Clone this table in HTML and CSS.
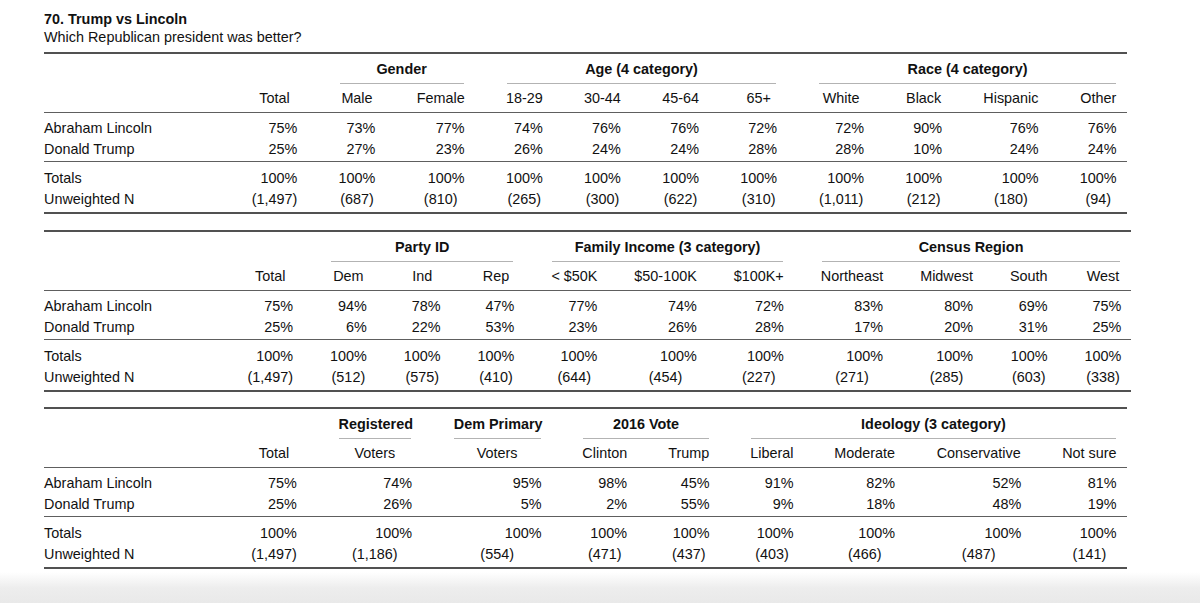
FILE: index.html
```html
<!DOCTYPE html>
<html lang="en">
<head>
<meta charset="utf-8">
<title>70. Trump vs Lincoln</title>
<link rel="stylesheet" href="styles.css">
</head>
<body>
<main class="page">
  <h1 class="title">70. Trump vs Lincoln</h1>
  <p class="subtitle">Which Republican president was better?</p>

  <section class="xtab t1">
    <div class="row grp">
      <div class="g lead span2">Gender</div>
      <div class="g span4">Age (4 category)</div>
      <div class="g span4">Race (4 category)</div>
    </div>
    <div class="row hdr">
      <div></div>
      <div>Total</div><div>Male</div><div>Female</div><div>18-29</div><div>30-44</div><div>45-64</div><div>65+</div><div>White</div><div>Black</div><div>Hispanic</div><div>Other</div>
    </div>
    <div class="block top">
      <div class="row val"><div class="lbl">Abraham Lincoln</div><div>75%</div><div>73%</div><div>77%</div><div>74%</div><div>76%</div><div>76%</div><div>72%</div><div>72%</div><div>90%</div><div>76%</div><div>76%</div></div>
      <div class="row val"><div class="lbl">Donald Trump</div><div>25%</div><div>27%</div><div>23%</div><div>26%</div><div>24%</div><div>24%</div><div>28%</div><div>28%</div><div>10%</div><div>24%</div><div>24%</div></div>
    </div>
    <div class="block bottom">
      <div class="row val"><div class="lbl">Totals</div><div>100%</div><div>100%</div><div>100%</div><div>100%</div><div>100%</div><div>100%</div><div>100%</div><div>100%</div><div>100%</div><div>100%</div><div>100%</div></div>
      <div class="row num"><div class="lbl">Unweighted N</div><div>(1,497)</div><div>(687)</div><div>(810)</div><div>(265)</div><div>(300)</div><div>(622)</div><div>(310)</div><div>(1,011)</div><div>(212)</div><div>(180)</div><div>(94)</div></div>
    </div>
  </section>

  <section class="xtab t2">
    <div class="row grp">
      <div class="g lead span3">Party ID</div>
      <div class="g span3">Family Income (3 category)</div>
      <div class="g span4">Census Region</div>
    </div>
    <div class="row hdr">
      <div></div>
      <div>Total</div><div>Dem</div><div>Ind</div><div>Rep</div><div>&lt; $50K</div><div>$50-100K</div><div>$100K+</div><div>Northeast</div><div>Midwest</div><div>South</div><div>West</div>
    </div>
    <div class="block top">
      <div class="row val"><div class="lbl">Abraham Lincoln</div><div>75%</div><div>94%</div><div>78%</div><div>47%</div><div>77%</div><div>74%</div><div>72%</div><div>83%</div><div>80%</div><div>69%</div><div>75%</div></div>
      <div class="row val"><div class="lbl">Donald Trump</div><div>25%</div><div>6%</div><div>22%</div><div>53%</div><div>23%</div><div>26%</div><div>28%</div><div>17%</div><div>20%</div><div>31%</div><div>25%</div></div>
    </div>
    <div class="block bottom">
      <div class="row val"><div class="lbl">Totals</div><div>100%</div><div>100%</div><div>100%</div><div>100%</div><div>100%</div><div>100%</div><div>100%</div><div>100%</div><div>100%</div><div>100%</div><div>100%</div></div>
      <div class="row num"><div class="lbl">Unweighted N</div><div>(1,497)</div><div>(512)</div><div>(575)</div><div>(410)</div><div>(644)</div><div>(454)</div><div>(227)</div><div>(271)</div><div>(285)</div><div>(603)</div><div>(338)</div></div>
    </div>
  </section>

  <section class="xtab t3">
    <div class="row grp">
      <div class="g lead">Registered</div>
      <div class="g">Dem Primary</div>
      <div class="g span2">2016 Vote</div>
      <div class="g span4">Ideology (3 category)</div>
    </div>
    <div class="row hdr">
      <div></div>
      <div>Total</div><div>Voters</div><div>Voters</div><div>Clinton</div><div>Trump</div><div>Liberal</div><div>Moderate</div><div>Conservative</div><div>Not sure</div>
    </div>
    <div class="block top">
      <div class="row val"><div class="lbl">Abraham Lincoln</div><div>75%</div><div>74%</div><div>95%</div><div>98%</div><div>45%</div><div>91%</div><div>82%</div><div>52%</div><div>81%</div></div>
      <div class="row val"><div class="lbl">Donald Trump</div><div>25%</div><div>26%</div><div>5%</div><div>2%</div><div>55%</div><div>9%</div><div>18%</div><div>48%</div><div>19%</div></div>
    </div>
    <div class="block bottom">
      <div class="row val"><div class="lbl">Totals</div><div>100%</div><div>100%</div><div>100%</div><div>100%</div><div>100%</div><div>100%</div><div>100%</div><div>100%</div><div>100%</div></div>
      <div class="row num"><div class="lbl">Unweighted N</div><div>(1,497)</div><div>(1,186)</div><div>(554)</div><div>(471)</div><div>(437)</div><div>(403)</div><div>(466)</div><div>(487)</div><div>(141)</div></div>
    </div>
  </section>
</main>
</body>
</html>
```

FILE: styles.css
```css
html {
  height: 100%;
  background: linear-gradient(to bottom, #ffffff 0, #ffffff 572px, #ededed 588px, #e9e9e9 603px);
}

body {
  margin: 0;
}

.page {
  padding: 10px 0 0 44px;
  font-family: "Liberation Sans", Arial, Helvetica, sans-serif;
  font-size: 14.4px;
  color: #111;
}

.title {
  margin: 0;
  font-size: 14.4px;
  font-weight: bold;
  line-height: 18px;
}

.subtitle {
  margin: 0;
  line-height: 18px;
}

.xtab {
  width: fit-content;
  margin-top: 6px;
  border-top: 2px solid #515151;
  border-bottom: 2px solid #515151;
}

.xtab + .xtab {
  margin-top: 15.5px;
}

.t1 {
  --cols: 166.4px 45.6px 36.8px 48px repeat(4, 36.8px) 45.6px 36.8px 55.2px 36.8px;
  --gap: 41.3px;
}

.t2 {
  --cols: 166.4px 45.6px repeat(3, 36.8px) 46px 62.4px 50px 62.4px 52.8px 37.6px 36.8px;
  --gap: 37px;
}

.t3 {
  --cols: 166.4px 45.6px 74.4px 88.8px 44.8px 41.6px 43.2px 60.8px 85.5px 54.4px;
  --gap: 40.8px;
}

.row {
  display: grid;
  grid-template-columns: var(--cols);
  column-gap: var(--gap);
  padding-right: 10px;
  line-height: 21px;
  white-space: nowrap;
}

/* group header row */
.grp {
  padding-top: 5px;
  font-weight: bold;
}

.grp .g {
  text-align: center;
  padding-bottom: 3px;
  margin: 0 1px;
  border-bottom: 1px solid #b3b3b3;
}

.grp .lead {
  grid-column-start: 3;
}

.span2 { grid-column-end: span 2; }
.span3 { grid-column-end: span 3; }
.span4 { grid-column-end: span 4; }

/* column header row */
.hdr {
  padding-top: 4px;
  padding-bottom: 3px;
  border-bottom: 1px solid #5e5e5e;
}

.hdr > div {
  justify-self: center;
}

/* body blocks */
.block.top {
  padding-top: 5px;
  padding-bottom: 1px;
  border-bottom: 1px solid #5e5e5e;
}

.block.bottom {
  padding-top: 6px;
  padding-bottom: 2px;
}

.val > div {
  justify-self: end;
}

.num > div {
  justify-self: center;
}

.row > .lbl {
  justify-self: start;
}
```
